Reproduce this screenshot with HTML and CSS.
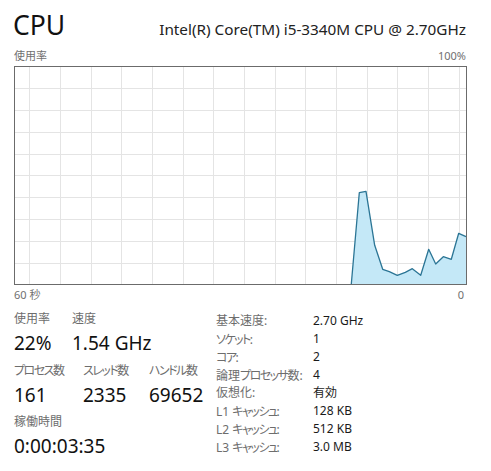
FILE: index.html
```html
<!DOCTYPE html>
<html lang="ja">
<head>
<meta charset="utf-8">
<link rel="stylesheet" href="styles.css">
</head>
<body>
<div class="page">
  <div class="header">
    <div class="title">CPU</div>
    <div class="model">Intel(R) Core(TM) i5-3340M CPU @ 2.70GHz</div>
  </div>
  <div class="axis-top">
    <span>使用率</span>
    <span>100%</span>
  </div>
  <svg class="graph" viewBox="0 0 453 219" width="453" height="219">
    <g class="grid">
      <line x1="15.5" y1="0" x2="15.5" y2="219"/>
      <line x1="46.5" y1="0" x2="46.5" y2="219"/>
      <line x1="77.5" y1="0" x2="77.5" y2="219"/>
      <line x1="107.5" y1="0" x2="107.5" y2="219"/>
      <line x1="138.5" y1="0" x2="138.5" y2="219"/>
      <line x1="169.5" y1="0" x2="169.5" y2="219"/>
      <line x1="199.5" y1="0" x2="199.5" y2="219"/>
      <line x1="230.5" y1="0" x2="230.5" y2="219"/>
      <line x1="261.5" y1="0" x2="261.5" y2="219"/>
      <line x1="291.5" y1="0" x2="291.5" y2="219"/>
      <line x1="322.5" y1="0" x2="322.5" y2="219"/>
      <line x1="353.5" y1="0" x2="353.5" y2="219"/>
      <line x1="383.5" y1="0" x2="383.5" y2="219"/>
      <line x1="414.5" y1="0" x2="414.5" y2="219"/>
      <line x1="445.5" y1="0" x2="445.5" y2="219"/>
      <line x1="0" y1="22.5" x2="453" y2="22.5"/>
      <line x1="0" y1="44.5" x2="453" y2="44.5"/>
      <line x1="0" y1="66.5" x2="453" y2="66.5"/>
      <line x1="0" y1="88.5" x2="453" y2="88.5"/>
      <line x1="0" y1="109.5" x2="453" y2="109.5"/>
      <line x1="0" y1="131.5" x2="453" y2="131.5"/>
      <line x1="0" y1="153.5" x2="453" y2="153.5"/>
      <line x1="0" y1="175.5" x2="453" y2="175.5"/>
      <line x1="0" y1="197.5" x2="453" y2="197.5"/>
    </g>
    <polygon class="area" points="337.3,218 345.3,126.7 352,125.3 360.7,179.3 368.7,203.3 375.3,205.7 383.3,209.3 391.3,206.3 398.3,202.7 406.7,209.3 414.7,183.3 421.7,198 429.3,190.7 437.3,193.3 444.7,167.3 452,170.7 452,218"/>
    <polyline class="line" points="337.3,218 345.3,126.7 352,125.3 360.7,179.3 368.7,203.3 375.3,205.7 383.3,209.3 391.3,206.3 398.3,202.7 406.7,209.3 414.7,183.3 421.7,198 429.3,190.7 437.3,193.3 444.7,167.3 452,170.7"/>
    <rect class="frame" x="0.5" y="0.5" width="452" height="218"/>
  </svg>
  <div class="axis-bottom">
    <span>60 秒</span>
    <span>0</span>
  </div>
  <div class="stats">
    <div class="left">
      <div class="row">
        <div class="stat w58"><div class="label">使用率</div><div class="value">22%</div></div>
        <div class="stat"><div class="label">速度</div><div class="value">1.54 GHz</div></div>
      </div>
      <div class="row">
        <div class="stat w69"><div class="label"><span class="kana">プロセス</span>数</div><div class="value">161</div></div>
        <div class="stat w66"><div class="label"><span class="kana">スレッド</span>数</div><div class="value">2335</div></div>
        <div class="stat"><div class="label"><span class="kana">ハンドル</span>数</div><div class="value">69652</div></div>
      </div>
      <div class="row">
        <div class="stat"><div class="label">稼働時間</div><div class="value">0:00:03:35</div></div>
      </div>
    </div>
    <div class="details">
      <span class="dl">基本速度:</span><span class="dv">2.70 GHz</span>
      <span class="dl"><span class="kana">ソケット</span>:</span><span class="dv">1</span>
      <span class="dl"><span class="kana">コア</span>:</span><span class="dv">2</span>
      <span class="dl">論理<span class="kana">プロセッサ</span>数:</span><span class="dv">4</span>
      <span class="dl">仮想化:</span><span class="dv">有効</span>
      <span class="dl">L1 <span class="kana">キャッシュ</span>:</span><span class="dv">128 KB</span>
      <span class="dl">L2 <span class="kana">キャッシュ</span>:</span><span class="dv">512 KB</span>
      <span class="dl">L3 <span class="kana">キャッシュ</span>:</span><span class="dv">3.0 MB</span>
    </div>
  </div>
</div>
</body>
</html>
```

FILE: styles.css
```css
html, body {
  margin: 0;
  padding: 0;
  background: #ffffff;
}

.page {
  width: 453px;
  padding: 0 0 0 14px;
  font-family: "Noto Sans", "Noto Sans CJK JP", sans-serif;
  color: #1a1a1a;
}

.header {
  display: flex;
  justify-content: space-between;
  align-items: baseline;
  height: 46px;
  padding-top: 10px;
  box-sizing: border-box;
}

.title {
  font-size: 26.5px;
  line-height: 30px;
  margin-left: -1px;
  color: #111;
}

.model {
  font-size: 15.3px;
  line-height: 20px;
  color: #222;
  padding-right: 1px;
}

.axis-top, .axis-bottom {
  display: flex;
  justify-content: space-between;
  font-size: 11px;
  line-height: 20px;
  color: #707070;
  height: 20px;
  padding-right: 1px;
}

.axis-bottom {
  height: 22px;
  padding-right: 3px;
}

.graph {
  display: block;
}

.grid line {
  stroke: #e4e4e4;
  stroke-width: 1;
}

.area {
  fill: #c4e8f7;
  stroke: none;
}

.line {
  fill: none;
  stroke: #2b7595;
  stroke-width: 1.3;
  stroke-linejoin: round;
}

.frame {
  fill: none;
  stroke: #6b6b6b;
  stroke-width: 1;
}

.kana {
  font-family: "Noto Sans CJK JP", sans-serif;
  font-feature-settings: "palt" 1;
  letter-spacing: -1.5px;
}

.stats {
  display: flex;
  padding-top: 4px;
}

.left {
  width: 202px;
  display: flex;
  flex-direction: column;
  gap: 7px;
}

.row {
  display: flex;
}

.w58 { width: 58px; }
.w69 { width: 69px; }
.w66 { width: 66px; }

.label {
  font-size: 12px;
  line-height: 16px;
  color: #6d6d6d;
}

.value {
  font-size: 19px;
  line-height: 24px;
  margin-top: 4px;
  color: #111;
}

.details {
  display: grid;
  grid-template-columns: 97px auto;
  grid-auto-rows: 18px;
  font-size: 12px;
  line-height: 18px;
  padding-top: 1px;
}

.dl {
  color: #6d6d6d;
}

.dv {
  color: #1a1a1a;
}
```
